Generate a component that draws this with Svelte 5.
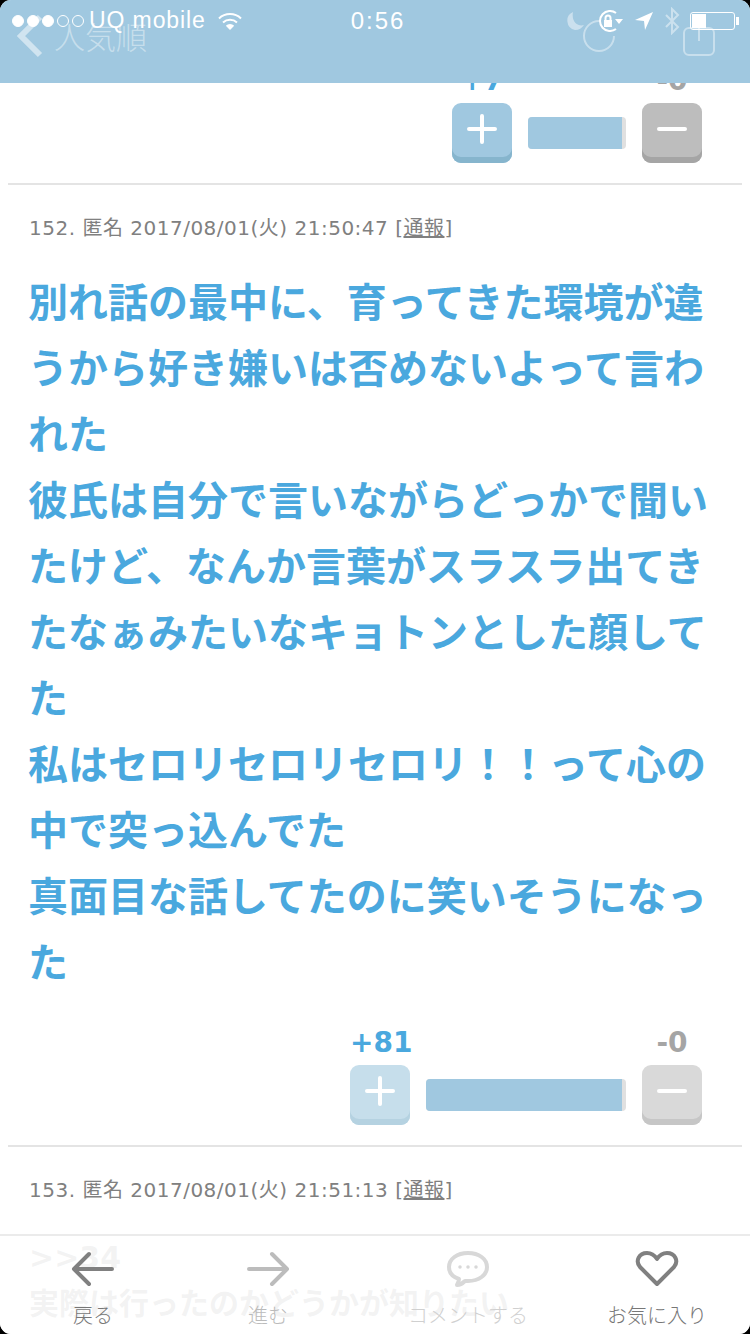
<script lang="ts">
	const comments = [
		{
			no: 152,
			date: '2017/08/01(火) 21:50:47',
			lines: [
				'別れ話の最中に、育ってきた環境が違うから好き嫌いは否めないよって言われた',
				'彼氏は自分で言いながらどっかで聞いたけど、なんか言葉がスラスラ出てきたなぁみたいなキョトンとした顔してた',
				'私はセロリセロリセロリ！！って心の中で突っ込んでた',
				'真面目な話してたのに笑いそうになった'
			],
			plus: 81,
			minus: 0,
			bar: 200
		}
	];
</script>

{#snippet votes(plus: number, minus: number, bar: number, dim: boolean)}
	<div class="votes" class:dim>
		<span class="count up">+{plus}</span>
		<span></span>
		<span class="count down">-{minus}</span>
		<button class="vote voteUp" aria-label="plus">
			<svg width="30" height="30" viewBox="0 0 30 30"><path d="M2 15h26M15 2v26" /></svg>
		</button>
		<div class="bar" style="width: {bar}px"><div class="fill"></div></div>
		<button class="vote voteDown" aria-label="minus">
			<svg width="30" height="30" viewBox="0 0 30 30"><path d="M2 15h26" /></svg>
		</button>
	</div>
{/snippet}

<div class="screen">
	<main class="content">
		<div class="comment">
			{@render votes(7, 0, 98, false)}
		</div>

		{#each comments as c}
			<article class="comment">
				<p class="meta">{c.no}. 匿名 {c.date} [<a href="#report">通報</a>]</p>
				<div class="body">
					{#each c.lines as line}
						<div>{line}</div>
					{/each}
				</div>
				{@render votes(c.plus, c.minus, c.bar, true)}
			</article>
		{/each}

		<article class="comment">
			<p class="meta">153. 匿名 2017/08/01(火) 21:51:13 [<a href="#report">通報</a>]</p>
			<div class="body small">
				<div>&gt;&gt;34</div>
				<div>実際は行ったのかどうかが知りたい</div>
			</div>
		</article>
	</main>

	<header class="header">
		<div class="navLeft">
			<svg class="chevron" width="28" height="44" viewBox="0 0 28 44"><path d="M24 3 5 22l19 19" /></svg>
			<span class="title">人気順</span>
		</div>
		<svg class="navIcons" width="140" height="44" viewBox="0 0 140 44">
			<path d="M20 3a15 15 0 1 0 15 15" />
			<rect x="105" y="10" width="30" height="27" rx="5" />
			<path d="M120 2v21" />
		</svg>
	</header>

	<div class="status">
		<div class="signal">
			<i class="on"></i><i class="on"></i><i class="on"></i><i></i><i></i>
		</div>
		<span class="carrier">UQ mobile</span>
		<svg width="26" height="20" viewBox="0 0 26 20" class="wifi">
			<path d="M2 7.500a16 16 0 0 1 22 0M6 11.500a10.500 10.500 0 0 1 14 0" />
			<path class="solid" d="M13 19 8.800 14.700a6 6 0 0 1 8.400 0z" />
		</svg>
		<span class="time">0:56</span>
		<div class="statusRight">
			<svg width="22" height="20" viewBox="0 0 22 20" class="faint"><path class="solid" d="M9 1a9.500 9.500 0 0 0 2 18c4 0 7-2 9-5-5 2-13-2-11-13z" /></svg>
			<svg width="28" height="22" viewBox="0 0 28 22">
				<path d="M20 3a10 10 0 1 0 0 16M3 11" />
				<path class="solid" d="M8 10h8v7H8zM19 9h8l-4 5z" />
				<path d="M9.500 10V8a2.500 2.500 0 0 1 5 0v2" />
			</svg>
			<svg width="20" height="20" viewBox="0 0 20 20"><path class="solid" d="M19 1 11 19l-1-9-9-1z" /></svg>
			<svg width="16" height="28" viewBox="0 0 16 28" class="faint"><path d="M2 8l12 12-6 6V2l6 6L2 20" /></svg>
			<div class="battery"><div class="level"></div></div>
		</div>
	</div>

	<nav class="tabbar">
		<div class="tab">
			<svg width="44" height="36" viewBox="0 0 44 36"><path d="M41 18H4M18 3 3 18l15 15" /></svg>
			<span>戻る</span>
		</div>
		<div class="tab off">
			<svg width="44" height="36" viewBox="0 0 44 36"><path d="M3 18h37M26 3l15 15-15 15" /></svg>
			<span>進む</span>
		</div>
		<div class="tab off faintest">
			<svg width="44" height="36" viewBox="0 0 44 36">
				<path d="M22 2c11 0 19 6 19 14s-8 14-19 14c-1 0-2 0-3 0-2 2-5 4-8 4 1-2 2-4 2-6C7 26 3 22 3 16 3 8 11 2 22 2z" />
				<path class="dots" d="M14 16h.01M22 16h.01M30 16h.01" />
			</svg>
			<span>コメントする</span>
		</div>
		<div class="tab">
			<svg width="44" height="36" viewBox="0 0 44 36"><path d="M22 33 5 16C0 10 4 2 12 2c5 0 8 3 10 6 2-3 5-6 10-6 8 0 12 8 7 14z" /></svg>
			<span>お気に入り</span>
		</div>
	</nav>
</div>

<style>
	:global(body) {
		background: #000;
	}

	.screen {
		position: relative;
		width: 750px;
		height: 1334px;
		overflow: hidden;
		background: #fff;
		border-radius: 11px;
		font-family: 'DejaVu Sans', 'Noto Sans CJK JP', sans-serif;
	}

	.content {
		padding-top: 66px;
	}

	.comment {
		margin: 0 8px;
		padding: 0 21px 20px;
		border-bottom: 2px solid #e4e4e4;
	}

	.meta {
		margin: 0;
		padding-top: 31px;
		font-size: 20px;
		letter-spacing: 0.5px;
		line-height: 24px;
		color: #808080;
	}

	.meta a {
		color: inherit;
		text-decoration: underline;
	}

	.body {
		margin: 30px 0 32px -1px;
		font-family: 'DejaVu Sans', 'Noto Sans CJK JP', sans-serif;
		font-size: 40px;
		font-weight: 700;
		line-height: 66px;
		color: #4aa8de;
	}

	.small {
		margin-top: 33px;
		margin-left: 0;
		font-size: 30px;
		line-height: 46px;
		color: #333;
	}

	.votes {
		display: grid;
		grid-template-columns: 60px auto 60px;
		justify-content: end;
		align-items: center;
		column-gap: 16px;
		row-gap: 7px;
		padding-right: 19px;
	}

	.count {
		font-size: 28px;
		font-weight: 700;
		line-height: 30px;
		text-align: center;
		white-space: nowrap;
	}

	.up {
		color: #4aa8de;
	}

	.down {
		color: #a5a5a5;
	}

	.vote {
		display: flex;
		align-items: center;
		justify-content: center;
		width: 60px;
		height: 60px;
		padding: 0 0 8px;
		border: 0;
		border-radius: 9px;
	}

	.vote svg path {
		fill: none;
		stroke: #fff;
		stroke-width: 4;
		stroke-linecap: round;
	}

	.voteUp {
		background: #a0c8e0;
		box-shadow: inset 0 -6px 0 #86b5cd;
	}

	.voteDown {
		background: #bdbdbd;
		box-shadow: inset 0 -6px 0 #a5a5a5;
	}

	.dim .voteUp {
		background: #c6deeb;
		box-shadow: inset 0 -6px 0 #b5d2e1;
	}

	.dim .voteDown {
		background: #d9d9d9;
		box-shadow: inset 0 -6px 0 #c6c6c6;
	}

	.bar {
		height: 32px;
		overflow: hidden;
		border-radius: 4px;
		background: #e0e0e0;
	}

	.fill {
		width: calc(100% - 4px);
		height: 100%;
		background: #a0c8e0;
	}

	.header {
		position: absolute;
		top: 0;
		left: 0;
		right: 0;
		display: flex;
		align-items: flex-start;
		justify-content: space-between;
		box-sizing: border-box;
		height: 83px;
		padding: 14px 31px 0 16px;
		background: #a0c8e0;
	}

	.navLeft {
		display: flex;
		align-items: center;
		gap: 10px;
	}

	.chevron path {
		fill: none;
		stroke: rgba(255, 255, 255, 0.5);
		stroke-width: 6;
	}

	.title {
		font-family: 'Noto Sans CJK JP', sans-serif;
		font-size: 31px;
		font-weight: 300;
		line-height: 42px;
		color: rgba(255, 255, 255, 0.42);
	}

	.navIcons {
		margin-top: 4px;
	}

	.navIcons path,
	.navIcons rect {
		fill: none;
		stroke: rgba(255, 255, 255, 0.42);
		stroke-width: 2;
	}

	.status {
		position: absolute;
		top: 0;
		left: 0;
		right: 0;
		display: flex;
		align-items: center;
		height: 41px;
		padding: 0 15px 0 12px;
		color: #fff;
		font-family: 'Liberation Sans', sans-serif;
	}

	.status path {
		fill: none;
		stroke: #fff;
		stroke-width: 2;
	}

	.status path.solid {
		fill: #fff;
		stroke: none;
	}

	.signal {
		display: flex;
		gap: 3px;
	}

	.signal i {
		box-sizing: border-box;
		width: 12px;
		height: 12px;
		border: 1px solid #fff;
		border-radius: 50%;
	}

	.signal i.on {
		background: #fff;
	}

	.carrier {
		margin-left: 5px;
		font-size: 23px;
		letter-spacing: 0.9px;
	}

	.wifi {
		margin-left: 11px;
	}

	.time {
		position: absolute;
		left: 0;
		right: 0;
		text-align: center;
		font-size: 24px;
		letter-spacing: 2px;
		padding-left: 6px;
	}

	.statusRight {
		display: flex;
		align-items: center;
		gap: 10px;
		margin-left: auto;
	}

	.status .faint {
		opacity: 0.45;
	}

	.battery {
		position: relative;
		box-sizing: border-box;
		width: 45px;
		height: 18px;
		padding: 1px;
		border: 1px solid #fff;
		border-radius: 3px;
	}

	.battery::after {
		content: '';
		position: absolute;
		top: 4px;
		right: -5px;
		width: 3px;
		height: 8px;
		background: #fff;
	}

	.level {
		width: 14px;
		height: 100%;
		background: #fff;
	}

	.tabbar {
		position: absolute;
		left: 0;
		right: 0;
		bottom: 0;
		display: grid;
		grid-template-columns: 186px 164px 236px 142px;
		box-sizing: border-box;
		height: 100px;
		padding-top: 15px;
		border-top: 2px solid #ebebeb;
		background: rgba(255, 255, 255, 0.94);
	}

	.tab {
		display: flex;
		flex-direction: column;
		align-items: center;
		color: #777;
		font-family: 'Noto Sans CJK JP', sans-serif;
		font-size: 20px;
		font-weight: 300;
		line-height: 28px;
		white-space: nowrap;
	}

	.tab svg {
		margin-bottom: 14px;
	}

	.tab path {
		fill: none;
		stroke: #808080;
		stroke-width: 4;
		stroke-linecap: round;
		stroke-linejoin: round;
	}

	.tab.off {
		color: #bbb;
	}

	.tab.off path {
		stroke: #bcbcbc;
	}

	.tab.faintest {
		color: #d0d0d0;
	}

	.tab.faintest path {
		stroke: #d8d8d8;
	}

	.tab .dots {
		stroke-width: 3.500;
	}
</style>
